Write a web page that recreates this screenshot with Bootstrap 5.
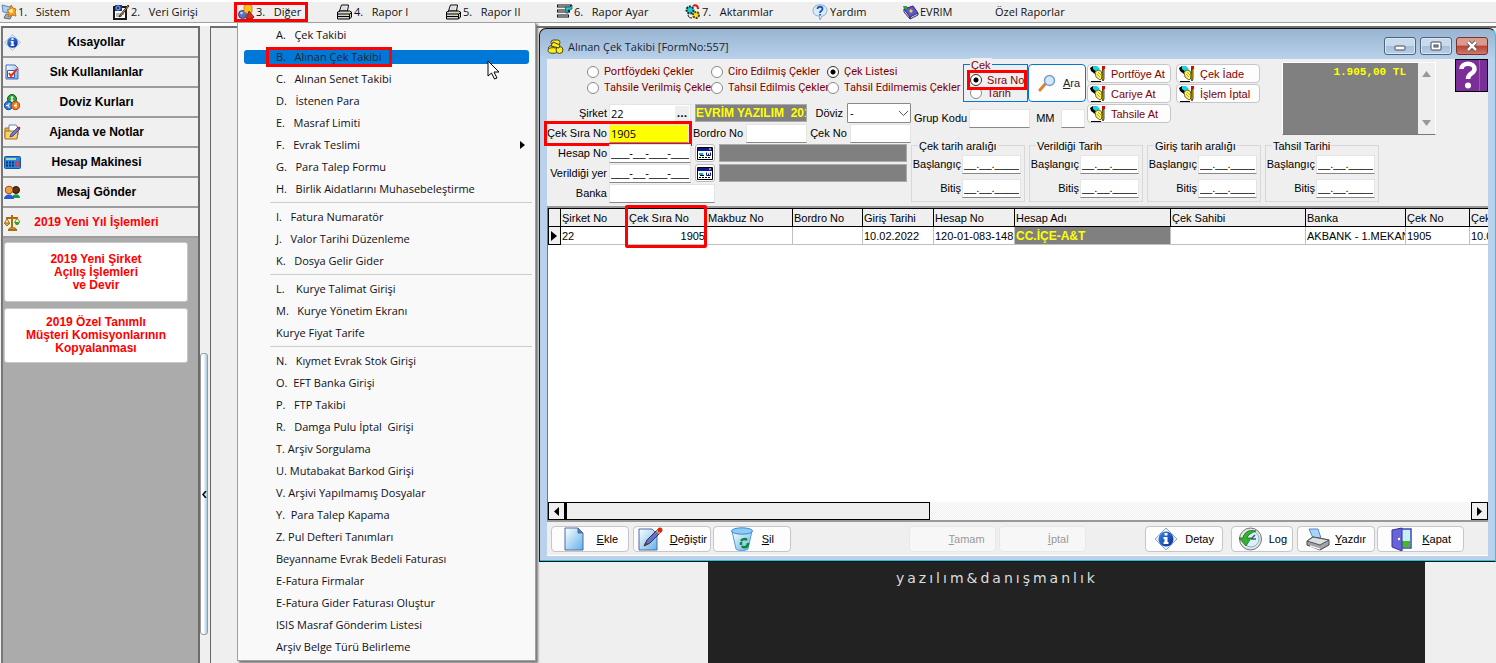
<!DOCTYPE html>
<html lang="tr">
<head>
<meta charset="utf-8">
<meta name="viewport" content="width=device-width, initial-scale=1">
<title>Alınan Çek Takibi</title>
<link href="https://cdn.jsdelivr.net/npm/bootstrap@5.3.0/dist/css/bootstrap.min.css" rel="stylesheet">
<style>
  :root { --face:#efefef; --frame:#b9d1ea; --maroon:#800000; --red:#ff0000; }
  body { background:var(--face); color:#000; font:11px/14px "Liberation Sans",sans-serif; overflow:hidden; }
  button, input, select { font:inherit; color:inherit; }
  svg { flex:none; display:block; }
  .ui-font { font-family:"Open Sans",sans-serif; font-size:11px; }
  .marked { outline:3px solid var(--red); }

  /* main menu */
  .mainmenu { display:grid; grid-template-columns:112px 125px 98px 109px 111px 129px 127px 91px 92px 1fr; height:23px; border-top:2px solid #fff; border-bottom:1px solid #a0a0a0; }
  .mainmenu > div { position:relative; }
  .mainmenu .top-link { display:flex; align-items:center; gap:1px; height:20px; padding:0 1px; color:#111; text-decoration:none; white-space:pre; }
  .mainmenu .top-link.marked { margin:3px 30px 3px 0; height:14px; }
  .popup { --bs-dropdown-font-size:11px; display:block; top:20px; left:0; width:299px; padding:1px 0 2px; margin:0; border:1px solid #a0a0a0; border-radius:0; background:#f9f9f9; box-shadow:2px 2px 2px #777; z-index:20; }
  .popup .dropdown-item { display:flex; align-items:center; width:auto; height:14px; margin:0 6px 8px; padding:0 4px 0 32px; line-height:14px; color:#101018; white-space:pre; border-radius:3px; }
  .popup li:first-child { padding-top:4px; }
  .popup li:last-child .dropdown-item { margin-bottom:4px; }
  .popup .dropdown-item.active { background:#0078d7; }
  .popup .marked { margin-left:-7px; padding:0 7px; }
  .popup .dropdown-divider { margin:-2px 3px 7px 32px; border-color:#ccc; opacity:1; }
  .pointer { position:absolute; left:249px; top:37px; }

  /* sidebar */
  .work { border-top:3px solid #fff; }
  .side { width:199px; background:#ababab; border:2px solid #6c6c6c; border-left:2px solid #777; border-bottom:0; margin-left:1px; }
  .side-btn { position:relative; height:30px; width:100%; border:0; border-bottom:2px solid #9c9c9c; background:#f0f0f0; font-size:12px; font-weight:bold; padding:0 14px 0 6px; }
  .side-btn.warn { color:#f00; }
  .side-btn svg { position:absolute; left:1px; top:6px; }
  .side-card { background:#fff; border:1px solid #c8c8c8; border-radius:3px; color:#f00; font-size:12px; font-weight:bold; line-height:13px; width:184px; margin-left:1px; }
  .tall { height:60px; margin-bottom:6px; } .short { height:55px; }
  .splitter { width:10px; padding-top:327px; }
  .grip { height:282px; width:8px; border:1px solid #999; border-radius:3px; background:linear-gradient(90deg,#fff 40%,#a9cbe0); padding:0; display:grid; place-items:center; }
  .client { border-left:1px solid #666; border-top:2px solid #707070; min-width:0; }

  /* form window */
  .win { margin-left:328px; border:1px solid #111; border-right-color:#27c8e0; border-radius:7px 7px 0 0; background:linear-gradient(#98b4d2,#b9d1ea 30px,#b9d1ea); padding:0 7px 5px; box-shadow:inset 0 -1px #20c4dc; }
  .titlebar { height:30px; color:#1b2430; padding-top:6px; }
  .wbtn { width:32px; height:18px; border:1px solid #4f6479; border-radius:3px; background:linear-gradient(#c8dbee 48%,#a5bfdb 52%,#b7cfe8); padding:0; box-shadow:inset 0 0 0 1px #d8e6f4; margin-top:-2px; }
  .wbtn.shut { background:linear-gradient(#d99b8d 45%,#ba4032 50%,#cf7868); border-color:#7c312b; box-shadow:none; }
  .panel { display:grid; grid-template-columns:364px 49px 126px 196px 158px 1fr; grid-template-rows:43px 36px 68px; background:var(--face); border-bottom:2px solid #999; }
  .panel label { white-space:nowrap; }
  .radios { grid-column:1/3; padding:5px 0 0 40px; display:grid; grid-template-columns:124px 116px 1fr; grid-auto-rows:16px; color:var(--maroon); font-family:Roboto,sans-serif; }
  .opt { display:flex; align-items:center; gap:5px; white-space:nowrap; }
  .opt input { appearance:none; width:12px; height:12px; margin:0; flex:none; border:1px solid #8a8a8a; border-radius:50%; background:#fff; }
  .opt input:checked { background:radial-gradient(#000 0 2px,#fff 3px); border-color:#333; }
  .fields { grid-row:2/4; padding-top:1px; }
  .line { display:flex; align-items:center; height:20px; }
  .line .lbl { width:60px; text-align:right; margin-right:2px; flex:none; }
  .box { height:19px; border:1px solid #e4e4e4; border-bottom-color:#888; background:#fff; padding:0 1px; min-width:0; border-radius:0; }
  .fbox { width:82px; } .key { width:80px; background:#ff0; }
  .wide { width:106px; } .mid { width:61px; } .dated { width:59px; } .tiny { width:24px; }
  .near { margin:0 3px; }
  .grey { background:#808080; border:1px solid #aaa; height:18px; color:#ff0; font-weight:bold; font-size:12px; overflow:hidden; white-space:pre; line-height:16px; }
  .firm { width:112px; }
  .ell { width:14px; height:15px; border:0; padding:0; margin-left:-16px; margin-right:2px; background:#eee; font-weight:bold; line-height:8px; }
  .pick { width:20px; height:18px; border:1px solid #bbb; border-radius:3px; background:#fff; padding:0; display:grid; place-items:center; }
  .cur { width:64px; height:20px; border:1px solid #888; background:#fff; appearance:none; padding:0 2px; border-radius:1px; }
  .selwrap { position:relative; } .selwrap svg { position:absolute; right:3px; top:8px; pointer-events:none; }
  .cekbox { width:65px; height:38px; border:1px solid #0078d7; position:relative; margin:5px 0 0 3px; padding:4px 0 0 3px; }
  .cekbox legend, .range legend { position:absolute; top:-7px; left:6px; width:auto; margin:0; padding:0 1px; font-size:11px; line-height:14px; float:none; background:var(--face); white-space:nowrap; }
  .cekbox, .acts { color:var(--maroon); }
  .cekbox .opt { height:14px; width:54px; position:relative; margin-left:3px; background:var(--face); }
  .cekbox .opt + .opt { height:12px; z-index:0; margin-top:0; }
  .cekbox .opt.marked { z-index:1; margin-top:4px; }
  .btnx { border:1px solid #c6c6c6; border-radius:4px; background:#fdfdfd; padding:0; display:flex; align-items:center; white-space:nowrap; }
  .find { width:58px; height:38px; margin-top:5px; border-color:#0078d7; padding-left:9px; gap:7px; }
  .acts { grid-row:1/3; grid-column:4; display:grid; grid-template-columns:84px 84px; gap:1px 5px; grid-auto-rows:19px; align-content:start; padding:5px 0 0 1px; }
  .acts .btnx { padding-left:2px; gap:5px; }
  .grp { grid-row:2; grid-column:2/4; height:32px; padding-left:3px; gap:2px; }
  .ranges { grid-row:3; grid-column:2/7; display:flex; gap:4px; padding-top:7px; }
  .range { position:relative; width:114px; height:57px; border:1px solid #d8d8d8; padding:7px 3px 0 0; }
  .range .row-in { display:flex; justify-content:flex-end; align-items:center; gap:1px; height:22px; margin-bottom:2px; }
  .memo { grid-row:1/3; grid-column:5; display:flex; height:73px; margin-top:3px; width:154px; border:1px solid #fff; border-bottom-color:#777; }
  .memo-text { background:#808080; color:#ff0; font:bold 11px/14px "Liberation Mono",monospace; text-align:right; padding:2px 12px 0 0; }
  .help { justify-self:end; grid-column:6; grid-row:1; width:33px; height:33px; padding:0; border:1px solid #000; background:linear-gradient(90deg,#7b2d98 75%,#9b5db3 75% 77%,#7b2d98 77%); }

  /* grid */
  .gridwrap { height:294px; background:#fff; overflow:hidden; border-left:1px solid #777; }
  .grid-t { table-layout:fixed; width:1000px; border-collapse:collapse; white-space:nowrap; }
  .grid-t th, .grid-t td { height:18px; padding:0 2px; overflow:hidden; font-weight:normal; border-right:1px solid #c0c0c0; border-bottom:1px solid #c0c0c0; }
  .grid-t thead th { background:#efefef; border:1px solid #000; padding:0 1px; }
  .grid-t tbody th { background:#efefef; border:1px solid #000; }
  .grid-t tbody td { padding:0 1px; }
  .grid-t .hl { background:#808080; color:#ff0; font-weight:bold; font-size:12px; }
  .grid-box { position:absolute; left:78px; top:-3px; width:82px; height:43px; border:3px solid var(--red); border-radius:2px; pointer-events:none; }
  .hbar { display:flex; height:18px; border-left:1px solid #777; background:repeating-conic-gradient(#efefef 0 25%,#fff 0 50%) 0 0/2px 2px; }
  .hbtn { width:17px; border:1px solid #000; background:#efefef; padding:0; display:grid; place-items:center; }
  .thumb { width:365px; border:1px solid #000; border-left-width:2px; background:#efefef; }
  .cmds { display:flex; align-items:center; height:36px; background:var(--face); border-top:2px solid #999; border-bottom:1px solid #fff; padding:1px 24px 0 4px; }
  .cmds .btnx { height:26px; width:78px; margin-right:4px; padding:0 10px 0 12px; justify-content:space-between; }
  .cmds .btnx.snug { padding:0 3px 0 4px; margin-right:2px; }
  .cmds .btnx.big { width:87px; margin-right:3px; justify-content:flex-end; }
  .cmds .btnx:disabled { color:#999; background:#f7f7f7; border-color:#e8e8e8; }
  .cmds .big.room { justify-content:space-between; margin-right:0; padding:0 12px; }
  .cmds .log { width:62px; padding:0 5px 0 6px; }
  .gap-a { flex:121; } .gap-b { flex:60; }
  .splash { margin:0 71px 0 497px; background:#222; color:#ddd; padding:8px 0 0 188px; font:14px/16px "DejaVu Sans",sans-serif; letter-spacing:3px; min-height:100px; }
</style>
</head>
<body class="vh-100 d-flex flex-column">
<svg width="0" height="0" class="position-absolute" aria-hidden="true">
  <defs>
    <linearGradient id="bl" x1="0" y1="0" x2="1" y2="1"><stop offset="0" stop-color="#fff"/><stop offset="1" stop-color="#5fb2ea"/></linearGradient>
    <linearGradient id="bd" x1="0" y1="0" x2="1" y2="1"><stop offset="0" stop-color="#3b86ea"/><stop offset="1" stop-color="#062a96"/></linearGradient>
    <symbol id="i-info" viewBox="0 0 24 24"><path d="M12 1l11 11-11 11L1 12z" fill="#e8f1fb" stroke="#8ea6c4"/><circle cx="12" cy="12" r="7.500" fill="url(#bd)"/><path d="M10.500 10h3v5h1v2h-5v-2h1v-3h-1v-2zM10.500 6h3v2.500h-3z" fill="#fff"/></symbol>
    <symbol id="i-print" viewBox="0 0 16 16"><path d="M5 1h7l-1 6H3z" fill="#fff" stroke="#000"/><path d="M5 3h5M5 5h5" stroke="#bbb"/><path d="M1 8l3-1h9l2 1v5l-2 2H1z" fill="#d4d4d4" stroke="#000"/><path d="M1 10h12v5M1 12.500h12M13 10l2-1" stroke="#000" fill="none"/><path d="M10 11h2v1h-2z" fill="#ff0"/></symbol>
    <symbol id="i-hand" viewBox="0 0 16 16"><path d="M0 2l3-2 5 3-3 5-4-3z" fill="#000"/><path d="M3 0h4l3 3-3 3-4-3z" fill="#19d3e8"/><path d="M5 6l3-2 3 1 1 3v4l-2 2-4-3z" fill="#fff06a" stroke="#554a00" stroke-width=".8"/><path d="M7 8l3 3M8 6l3 3" stroke="#8a7a00" stroke-width=".6"/><path d="M12.500 3h1.500v10l-1 2-1-2z" fill="#e8c800" stroke="#000" stroke-width=".7"/><path d="M12 0h3v3h-3z" fill="#e00"/><path d="M1 15.500h10" stroke="#000"/></symbol>
    <symbol id="i-form" viewBox="0 0 16 13"><path d="M.5.5h15v12H.5z" fill="#fff" stroke="#000"/><path d="M1 1h14v3H1z" fill="#0b1a8c"/><path d="M12 1.500h2v1h-2z" fill="#fff"/><path d="M2 6h4v2H2z" fill="#0bb"/><path d="M2 10.500h12" stroke="#000" stroke-dasharray="2 1"/><path d="M3 8.500h4" stroke="#000"/><path d="M9.500 5.500v3h4v-3M11.500 6.500v2" stroke="#0b1a8c" fill="none"/></symbol>
    <symbol id="i-coins" viewBox="0 0 17 16"><g fill="#ffee10" stroke="#333" stroke-width=".9"><rect x="4" y="1" width="9" height="5" rx="2.500"/><ellipse cx="6" cy="9" rx="4.500" ry="2.500"/><ellipse cx="6" cy="11.500" rx="5" ry="2.800"/><circle cx="12.500" cy="11" r="3.500"/><path d="M6 3l7 3-1 3-8-2z"/></g></symbol>
    <symbol id="i-page" viewBox="0 0 20 24"><path d="M1 1h13l5 5v17H1z" fill="url(#bl)" stroke="#5368a8"/><path d="M14 1v5h5z" fill="#3f7fd0" stroke="#5368a8"/></symbol>
    <symbol id="i-note" viewBox="0 0 16 16"><path d="M2 1h9l3 3v11H2z" fill="url(#bl)" stroke="#4b68b0"/><path d="M3.500 6.500h7v7h-7z" fill="#fff" stroke="#2c5abf"/><path d="M5 9l2 3 6-7" fill="none" stroke="#f03010" stroke-width="2"/></symbol>
  </defs>
</svg>

<nav class="mainmenu ui-font flex-shrink-0" aria-label="Ana menü">
  <div><a class="top-link" href="#"><svg width="16" height="16" viewBox="0 0 16 16"><path d="M1 1l8 2v6L2 8z" fill="#a8d0f4" stroke="#6484b0"/><path d="M5 10l6 1-2 4-6-1z" fill="#9fb1cc" stroke="#667"/><path d="M6 6l3-1 1-4 2 3 3 1-1 3 1 4-4-1-4 2 1-4z" fill="#f6a623" stroke="#c8741a"/><circle cx="10" cy="7" r="2" fill="#ffe9a8"/></svg>1.   Sistem</a></div>
  <div><a class="top-link" href="#"><svg width="17" height="16" viewBox="0 0 17 16"><path d="M1 3h12v12H1z" fill="#fff" stroke="#1a1a1a" stroke-width="2"/><path d="M2 1h7v6H2z" fill="#1b3c88"/><circle cx="5" cy="4" r="2" fill="none" stroke="#7fb0ff"/><path d="M3 10h8M3 12h6" stroke="#777"/><path d="M15 1l1 1-8 10-2 1 1-2z" fill="#d99b4a" stroke="#000" stroke-width=".7"/></svg>2.   Veri Girişi</a></div>
  <div>
    <a class="top-link marked" href="#" aria-expanded="true"><svg width="17" height="16" viewBox="0 0 17 16"><circle cx="4.500" cy="10.500" r="4" fill="#5870c8" stroke="#2c3c80"/><circle cx="3.500" cy="9" r="1.300" fill="#c8d4ff"/><path d="M6 2l4-2 4 2v6l-4 2-4-2z" fill="#fcc21c" stroke="#c67a0a" stroke-width=".8"/><path d="M8 15l3-8 5 6-2 2z" fill="#e02818" stroke="#701008" stroke-width=".8"/></svg>3.   Diğer</a>
    <ul class="dropdown-menu popup show">
      <li><a class="dropdown-item" href="#">A.   Çek Takibi</a></li>
      <li><a class="dropdown-item active text-dark" href="#"><span class="marked">B.   Alınan Çek Takibi</span></a></li>
      <li><a class="dropdown-item" href="#">C.   Alınan Senet Takibi</a></li>
      <li><a class="dropdown-item" href="#">D.   İstenen Para</a></li>
      <li><a class="dropdown-item" href="#">E.   Masraf Limiti</a></li>
      <li><a class="dropdown-item" href="#">F.   Evrak Teslimi<svg class="ms-auto" width="5" height="8" viewBox="0 0 5 8"><path d="M0 0l5 4-5 4z"/></svg></a></li>
      <li><a class="dropdown-item" href="#">G.   Para Talep Formu</a></li>
      <li><a class="dropdown-item" href="#">H.   Birlik Aidatlarını Muhasebeleştirme</a></li>
      <li><hr class="dropdown-divider"></li>
      <li><a class="dropdown-item" href="#">I.   Fatura Numaratör</a></li>
      <li><a class="dropdown-item" href="#">J.   Valor Tarihi Düzenleme</a></li>
      <li><a class="dropdown-item" href="#">K.   Dosya Gelir Gider</a></li>
      <li><hr class="dropdown-divider"></li>
      <li><a class="dropdown-item" href="#">L.    Kurye Talimat Girişi</a></li>
      <li><a class="dropdown-item" href="#">M.   Kurye Yönetim Ekranı</a></li>
      <li><a class="dropdown-item" href="#">Kurye Fiyat Tarife</a></li>
      <li><hr class="dropdown-divider"></li>
      <li><a class="dropdown-item" href="#">N.   Kıymet Evrak Stok Girişi</a></li>
      <li><a class="dropdown-item" href="#">O.  EFT Banka Girişi</a></li>
      <li><a class="dropdown-item" href="#">P.   FTP Takibi</a></li>
      <li><a class="dropdown-item" href="#">R.   Damga Pulu İptal  Girişi</a></li>
      <li><a class="dropdown-item" href="#">T. Arşiv Sorgulama</a></li>
      <li><a class="dropdown-item" href="#">U. Mutabakat Barkod Girişi</a></li>
      <li><a class="dropdown-item" href="#">V. Arşivi Yapılmamış Dosyalar</a></li>
      <li><a class="dropdown-item" href="#">Y.  Para Talep Kapama</a></li>
      <li><a class="dropdown-item" href="#">Z. Pul Defteri Tanımları</a></li>
      <li><a class="dropdown-item" href="#">Beyanname Evrak Bedeli Faturası</a></li>
      <li><a class="dropdown-item" href="#">E-Fatura Firmalar</a></li>
      <li><a class="dropdown-item" href="#">E-Fatura Gider Faturası Oluştur</a></li>
      <li><a class="dropdown-item" href="#">ISIS Masraf Gönderim Listesi</a></li>
      <li><a class="dropdown-item" href="#">Arşiv Belge Türü Belirleme</a>
        <svg class="pointer" width="13" height="20" viewBox="0 0 13 20"><path d="M1 1v15l3.500-3 3 6 2.500-1-3-6H12z" fill="#fff" stroke="#000"/></svg></li>
    </ul>
  </div>
  <div><a class="top-link" href="#"><svg width="17" height="16"><use href="#i-print"/></svg>4.   Rapor I</a></div>
  <div><a class="top-link" href="#"><svg width="17" height="16"><use href="#i-print"/></svg>5.   Rapor II</a></div>
  <div><a class="top-link" href="#"><svg width="17" height="16" viewBox="0 0 17 16"><path d="M1 2h15M1 7h13M1 12h12" stroke="#111" stroke-width="3"/><path d="M2 2h12M2 7h10M2 12h10" stroke="#eee"/><path d="M9 3h5l2-2v4l-2 1h-2v3h-2V6z" fill="#28c4cc" stroke="#055" stroke-width=".7"/></svg>6.   Rapor Ayar</a></div>
  <div><a class="top-link" href="#"><svg width="16" height="16" viewBox="0 0 16 16"><circle cx="5" cy="6" r="3.500" fill="#20c8d0" stroke="#033" stroke-dasharray="2 1" stroke-width="2"/><circle cx="11" cy="11" r="3" fill="#f5e020" stroke="#540" stroke-dasharray="2 1" stroke-width="2"/><path d="M8 2c3-2 5 0 5 3" stroke="#e01010" stroke-width="2" fill="none"/><path d="M3 11c0 2 2 3 4 3" stroke="#111" fill="none"/></svg>7.   Aktarımlar</a></div>
  <div><a class="top-link" href="#"><svg width="17" height="16" viewBox="0 0 17 16"><path d="M8 .8c4 0 7 2.200 7 5.700S12 12 10 12l-2 4-1-4C4 12 1 10 1 6.500S4 .8 8 .8z" fill="#d8ebfb" stroke="#86aad0"/><path d="M5.500 5c0-3 5-3 5 0 0 2-2.500 1.500-2.500 4M8 10v1.500" stroke="#1a55b8" stroke-width="1.800" fill="none"/></svg>Yardım</a></div>
  <div><a class="top-link" href="#"><svg width="16" height="16" viewBox="0 0 16 16"><path d="M1 5l9-3 5 7-8 5z" fill="#5a58c8" stroke="#2a2878"/><path d="M1 5v3l6 7v-2zM7 13v2l8-4V9z" fill="#e0e0f4" stroke="#2a2878"/><path d="M6 7l2-2 2 2-2 2z" fill="#ffc820"/><path d="M0 2h4v3H1z" fill="#30a030"/></svg>EVRIM</a></div>
  <div><a class="top-link" href="#">Özel Raporlar</a></div>
</nav>

<div class="work d-flex flex-grow-1">
  <aside class="side flex-shrink-0">
    <button class="side-btn"><svg width="17" height="17"><use href="#i-info"/></svg>Kısayollar</button>
    <button class="side-btn"><svg width="16" height="16"><use href="#i-note"/></svg>Sık Kullanılanlar</button>
    <button class="side-btn"><svg width="16" height="17" viewBox="0 0 16 17"><circle cx="8" cy="5" r="4.500" fill="#28a038" stroke="#106018"/><circle cx="4.500" cy="11.500" r="4.200" fill="#2c7cd8" stroke="#1248a0"/><circle cx="11.500" cy="11.500" r="4.200" fill="#f07818" stroke="#b04808"/><path d="M9.500 3.500c-3-1.500-3 1.500-1.500 1.500 2 .5 1.500 3-1.500 1.500M8 2v6M6 10c-3-1-3 4 0 3M2 11.500h3M13 10c-3-1-3 4 0 3M10 11.500h3" stroke="#fff" fill="none"/></svg>Doviz Kurları</button>
    <button class="side-btn"><svg width="17" height="16" viewBox="0 0 17 16"><path d="M1 4h4l1-2h7v12H1z" fill="#e8b040" stroke="#a87010"/><path d="M5 1h7l2 3v7H5z" fill="#fff" stroke="#6484b8"/><path d="M1 7h13l-1 8H1z" fill="#f8d070" stroke="#a87010"/><path d="M14 3l2 2-7 7-3 1 1-3z" fill="#6a7cd0" stroke="#333c80" stroke-width=".8"/><circle cx="15" cy="4" r="1.300" fill="#d02020"/></svg>Ajanda ve Notlar</button>
    <button class="side-btn"><svg width="17" height="16" viewBox="0 0 17 16"><rect x=".5" y="2.500" width="16" height="12" rx="1" fill="#2d86dc" stroke="#1258a8"/><path d="M2 4h10v2H2z" fill="#a8dcb0"/><path d="M2 8.500h8M2 11.500h8" stroke="#0b2f70" stroke-width="2" stroke-dasharray="2 1"/><path d="M11 8.500h5M11 11.500h5" stroke="#e03030" stroke-width="2" stroke-dasharray="2 1"/></svg>Hesap Makinesi</button>
    <button class="side-btn"><svg width="17" height="16" viewBox="0 0 17 16"><circle cx="12" cy="6" r="3.500" fill="#603018" stroke="#301000"/><path d="M8 14c0-5 8-5 8 0z" fill="#189848"/><circle cx="5" cy="6" r="3.800" fill="#f0a040" stroke="#985010"/><path d="M0 15c0-6 10-6 10 0z" fill="#2858d8"/></svg>Mesaj Gönder</button>
    <button class="side-btn warn"><svg width="17" height="17" viewBox="0 0 17 17"><path d="M8 1v13M2 4h12M4 16h9" stroke="#a87008" stroke-width="2"/><path d="M0 9h6l-3 3zM3 4L1 9M3 4l2 5M13 4l-2 4M13 4l3 4" fill="#e8b020" stroke="#a87008"/><path d="M10 8h6l-2 3h-2z" fill="#28a030"/><path d="M5 15c0-2 7-2 7 0z" fill="#f0c030" stroke="#a87008"/></svg>2019 Yeni Yıl İşlemleri</button>
    <button class="side-card tall d-block mt-1">2019 Yeni Şirket<br>Açılış İşlemleri<br>ve Devir</button>
    <button class="side-card short d-block">2019 Özel Tanımlı<br>Müşteri Komisyonlarının<br>Kopyalanması</button>
  </aside>
  <div class="splitter flex-shrink-0"><button class="grip" aria-label="Paneli daralt"><svg width="5" height="7" viewBox="0 0 5 7"><path d="M4 0L1 3.500 4 7" fill="none" stroke="#000" stroke-width="1.500"/></svg></button></div>

  <main class="client flex-grow-1 d-flex flex-column">
    <section class="win">
      <header class="titlebar d-flex align-items-center gap-1 ui-font">
        <svg width="17" height="16"><use href="#i-coins"/></svg><span class="me-auto">Alınan Çek Takibi [FormNo:557]</span>
        <button class="wbtn" aria-label="Simge durumuna küçült"><svg width="30" height="16" viewBox="0 0 30 16"><rect x="10" y="8" width="10" height="4" rx="1" fill="#fff" stroke="#445"/></svg></button>
        <button class="wbtn" aria-label="Ekranı kapla"><svg width="30" height="16" viewBox="0 0 30 16"><rect x="10" y="4" width="10" height="8" rx="1" fill="#fff" stroke="#445"/><rect x="13" y="7" width="4" height="2" fill="#9db8d4" stroke="#445"/></svg></button>
        <button class="wbtn shut" aria-label="Kapat"><svg width="30" height="16" viewBox="0 0 30 16"><path d="M11 4l8 8M19 4l-8 8" stroke="#444" stroke-width="4"/><path d="M11 4l8 8M19 4l-8 8" stroke="#fff" stroke-width="2.500"/></svg></button>
      </header>

      <form class="panel">
        <div class="radios">
          <label class="opt"><input type="radio" name="durum">Portföydeki Çekler</label>
          <label class="opt"><input type="radio" name="durum">Ciro Edilmiş Çekler</label>
          <label class="opt"><input type="radio" name="durum" checked>Çek Listesi</label>
          <label class="opt"><input type="radio" name="durum">Tahsile Verilmiş Çekler</label>
          <label class="opt"><input type="radio" name="durum">Tahsil Edilmis Çekler</label>
          <label class="opt"><input type="radio" name="durum">Tahsil Edilmemis Çekler</label>
        </div>

        <div class="fields">
          <div class="line"><label class="lbl" for="sirket">Şirket</label><input id="sirket" class="box fbox ui-font" value="22"><button type="button" class="ell" aria-label="Şirket seç">…</button><span class="grey firm ms-1">EVRİM YAZILIM  2019</span><label class="ms-auto me-1" for="doviz">Döviz</label><span class="selwrap"><select id="doviz" class="cur"><option>-</option></select><svg width="9" height="5" viewBox="0 0 9 5"><path d="M0 0l4.500 4.500L9 0" fill="none" stroke="#555"/></svg></span></div>
          <div class="line"><span class="d-flex align-items-center marked"><label class="lbl" for="sira">Çek Sıra No</label><input id="sira" class="box key ui-font" value="1905"></span><label class="near ms-1" for="bordro">Bordro No</label><input id="bordro" class="box mid"><label class="near" for="cekno">Çek No</label><input id="cekno" class="box mid"></div>
          <div class="line"><label class="lbl" for="hesap">Hesap No</label><input id="hesap" class="box fbox" value="___-__-___-___"><button type="button" class="pick mx-1" aria-label="Hesap seç"><svg width="16" height="13"><use href="#i-form"/></svg></button><span class="grey flex-grow-1 me-1"></span></div>
          <div class="line"><label class="lbl" for="yer">Verildiği yer</label><input id="yer" class="box fbox" value="___-__-___-___"><button type="button" class="pick mx-1" aria-label="Yer seç"><svg width="16" height="13"><use href="#i-form"/></svg></button><span class="grey flex-grow-1 me-1"></span></div>
          <div class="line"><label class="lbl" for="banka">Banka</label><input id="banka" class="box wide"></div>
        </div>

        <div class="d-flex" style="grid-column:3;grid-row:1">
          <fieldset class="cekbox">
            <legend>Çek</legend>
            <label class="opt marked"><input type="radio" name="cek" checked>Sıra No</label>
            <label class="opt"><input type="radio" name="cek">Tarih</label>
          </fieldset>
          <button type="button" class="btnx find text-dark"><svg width="18" height="18" viewBox="0 0 18 18"><path d="M2 16l6-7" stroke="#e08028" stroke-width="3" stroke-linecap="round"/><circle cx="11.500" cy="6.500" r="5" fill="#cfe8fb" stroke="#7d9cc8" stroke-width="1.500"/></svg><span><u>A</u>ra</span></button>
        </div>

        <div class="line grp"><label for="grup">Grup Kodu</label><input id="grup" class="box mid"><label class="ms-1" for="mm">MM</label><input id="mm" class="box tiny ms-1"></div>

        <div class="acts">
          <button type="button" class="btnx"><svg width="16" height="16"><use href="#i-hand"/></svg>Portföye At</button>
          <button type="button" class="btnx"><svg width="16" height="16"><use href="#i-hand"/></svg>Çek İade</button>
          <button type="button" class="btnx"><svg width="16" height="16"><use href="#i-hand"/></svg>Cariye At</button>
          <button type="button" class="btnx"><svg width="16" height="16"><use href="#i-hand"/></svg>İşlem İptal</button>
          <button type="button" class="btnx"><svg width="16" height="16"><use href="#i-hand"/></svg>Tahsile At</button>
        </div>

        <div class="ranges">
          <fieldset class="range"><legend>Çek tarih aralığı</legend>
            <div class="row-in"><label for="r1">Başlangıç</label><input id="r1" class="box dated" value="__.__.____"></div><div class="row-in"><label for="r2">Bitiş</label><input id="r2" class="box dated" value="__.__.____"></div></fieldset>
          <fieldset class="range"><legend>Verildiği Tarih</legend>
            <div class="row-in"><label for="r3">Başlangıç</label><input id="r3" class="box dated" value="__.__.____"></div><div class="row-in"><label for="r4">Bitiş</label><input id="r4" class="box dated" value="__.__.____"></div></fieldset>
          <fieldset class="range"><legend>Giriş tarih aralığı</legend>
            <div class="row-in"><label for="r5">Başlangıç</label><input id="r5" class="box dated" value="__.__.____"></div><div class="row-in"><label for="r6">Bitiş</label><input id="r6" class="box dated" value="__.__.____"></div></fieldset>
          <fieldset class="range"><legend>Tahsil Tarihi</legend>
            <div class="row-in"><label for="r7">Başlangıç</label><input id="r7" class="box dated" value="__.__.____"></div><div class="row-in"><label for="r8">Bitiş</label><input id="r8" class="box dated" value="__.__.____"></div></fieldset>
        </div>

        <div class="memo"><div class="memo-text flex-grow-1">1.905,00 TL</div><div class="d-flex flex-column justify-content-between p-1 py-2"><svg width="9" height="6" viewBox="0 0 9 6"><path d="M0 6l4.500-6L9 6z" fill="#999"/></svg><svg width="9" height="6" viewBox="0 0 9 6"><path d="M0 0l4.500 6L9 0z" fill="#999"/></svg></div></div>
        <button type="button" class="help" aria-label="Yardım"><svg width="31" height="31" viewBox="0 0 31 31"><path d="M5.500 9c0-7 13-7 13 0 0 5-6.500 4-6.500 10" stroke="#fff" stroke-width="4.500" fill="none"/><circle cx="12" cy="25.500" r="3" fill="#fff"/></svg></button>
      </form>

      <div class="position-relative">
        <div class="gridwrap">
          <table class="grid-t">
            <colgroup><col style="width:12px"><col style="width:67px"><col style="width:79px"><col style="width:86px"><col style="width:70px"><col style="width:71px"><col style="width:81px"><col style="width:156px"><col style="width:135px"><col style="width:100px"><col style="width:64px"><col></colgroup>
            <thead><tr><th></th><th>Şirket No</th><th>Çek Sıra No</th><th>Makbuz No</th><th>Bordro No</th><th>Giriş Tarihi</th><th>Hesap No</th><th>Hesap Adı</th><th>Çek Sahibi</th><th>Banka</th><th>Çek No</th><th>Çek Tarihi</th></tr></thead>
            <tbody><tr><th><svg width="6" height="10" viewBox="0 0 6 10"><path d="M0 0l6 5-6 5z"/></svg></th><td>22</td><td class="text-end">1905</td><td></td><td></td><td>10.02.2022</td><td>120-01-083-148</td><td class="hl">CC.İÇE-A&amp;T</td><td></td><td>AKBANK - 1.MEKAN</td><td>1905</td><td>10.02.2022</td></tr></tbody>
          </table>
        </div>
        <div class="grid-box"></div>
      </div>
      <div class="hbar"><button class="hbtn" aria-label="Sola kaydır"><svg width="5" height="9" viewBox="0 0 5 9"><path d="M5 0L0 4.500 5 9z"/></svg></button><div class="thumb"></div><button class="hbtn ms-auto" aria-label="Sağa kaydır"><svg width="5" height="9" viewBox="0 0 5 9"><path d="M0 0l5 4.500L0 9z"/></svg></button></div>

      <footer class="cmds">
        <button class="btnx"><svg width="20" height="24"><use href="#i-page"/></svg><span><u>E</u>kle</span></button>
        <button class="btnx snug"><svg width="25" height="24" viewBox="0 0 25 24"><path d="M1 2h13l5 5v16H1z" fill="url(#bl)" stroke="#5368a8"/><path d="M6 19l3-6L20 2l3 3L12 16z" fill="#6870c0" stroke="#2c3060"/><path d="M6 19l1.500-4 3 2.500z" fill="#6a4010"/><path d="M18 4l3 3 2-2-3-3z" fill="#f4c430"/><circle cx="22" cy="3" r="2.500" fill="#d82818"/></svg><span><u>D</u>eğiştir</span></button>
        <button class="btnx px-3"><svg width="24" height="24" viewBox="0 0 24 24"><path d="M2 4l4 18c2 2 10 2 12 0l4-18z" fill="url(#bl)" stroke="#4c9ddc"/><ellipse cx="12" cy="4" rx="10.500" ry="3.200" fill="#8fcbf5" stroke="#3a8cd4"/><path d="M11 14c2-3 5-2 6-1M18 16c0 5-5 5-6 3M11 15v3" fill="none" stroke="#0a8a30" stroke-width="2.500"/></svg><span><u>S</u>il</span></button>
        <span class="gap-a"></span>
        <button class="btnx big" disabled><span><u>T</u>amam</span></button>
        <button class="btnx big pe-3" disabled><span><u>İ</u>ptal</span></button>
        <span class="gap-b"></span>
        <button class="btnx px-2 me-2"><svg width="24" height="24"><use href="#i-info"/></svg><span>Detay</span></button>
        <button class="btnx log"><svg width="25" height="24" viewBox="0 0 25 24"><circle cx="12.500" cy="12" r="11" fill="#e0e6ea" stroke="#70787c"/><circle cx="13" cy="12" r="8" fill="#d8f2fb" stroke="#9ab"/><path d="M13 12l4-4M13 12h5" stroke="#456" stroke-width="1.500"/><path d="M18 4C10 2 6 6 5 11H1l7 8 5-8H9c1-3 4-5 9-7z" fill="#38b030" stroke="#187018" stroke-width=".8"/></svg><span>Log</span></button>
        <button class="btnx snug px-2"><svg width="24" height="24" viewBox="0 0 24 24"><path d="M3 2h9l3 9H7z" fill="#a8d4fa" stroke="#5a88c8"/><path d="M1 14l6-4 16 3v5l-9 5L1 18z" fill="#a0a4a8" stroke="#444"/><path d="M1 14l6-4 16 3-9 5z" fill="#dcdfe2" stroke="#555"/><path d="M4 19l10 3" stroke="#eee" stroke-width="1.500"/></svg><span><u>Y</u>azdır</span></button>
        <button class="btnx big room"><svg width="24" height="24" viewBox="0 0 24 24"><path d="M9 2h12v19H9z" fill="#c8eefa" stroke="#4048b0" stroke-width="1.500"/><path d="M10 14h10v6H10z" fill="#48b820"/><path d="M2 3l10-2v23L2 20z" fill="#6864d8" stroke="#3030a0"/><circle cx="9" cy="12" r="1.200" fill="#fff"/></svg><span><u>K</u>apat</span></button>
      </footer>
    </section>
    <div class="splash flex-grow-1">yazılım&amp;danışmanlık</div>
  </main>
</div>
<script src="https://cdn.jsdelivr.net/npm/bootstrap@5.3.0/dist/js/bootstrap.bundle.min.js"></script>
</body>
</html>
